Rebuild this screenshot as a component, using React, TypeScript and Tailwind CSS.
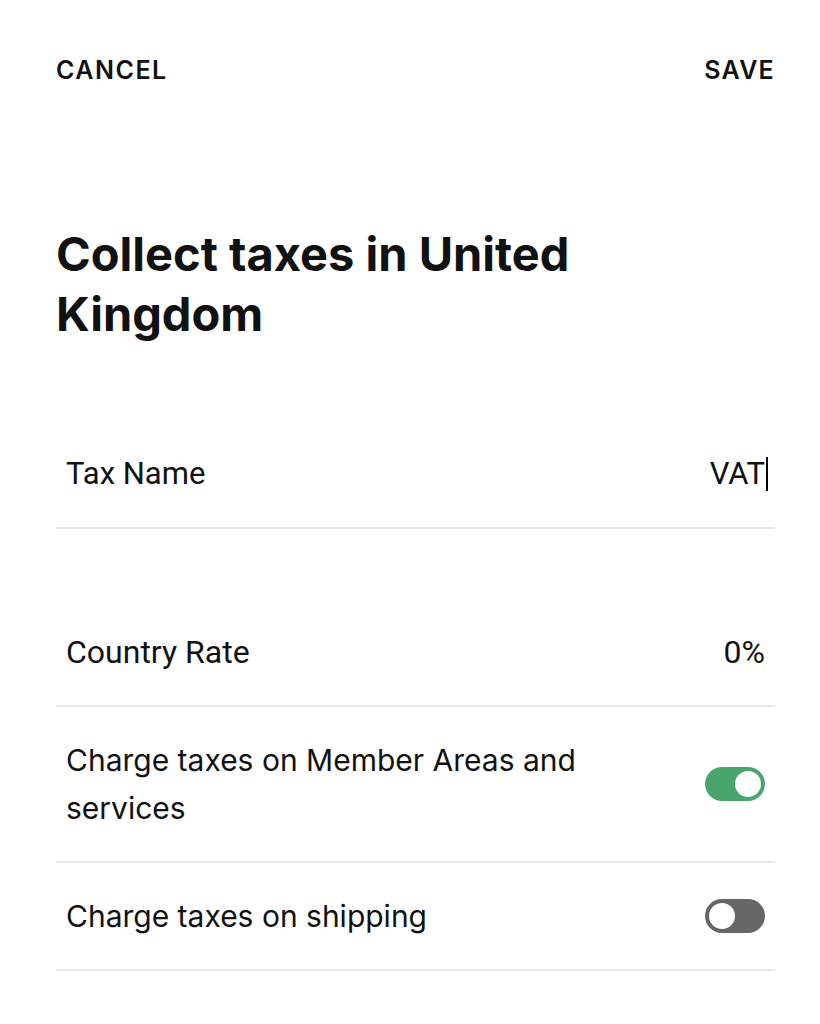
import React from "react"

const sans = { fontFamily: "Inter, 'Noto Sans', sans-serif" }
const narrow = { fontFamily: "Roboto, 'Liberation Sans', sans-serif" }

function Toggle({ on }: { on: boolean }) {
  return (
    <div
      className={`w-[60px] h-[34px] rounded-full flex items-center px-[4px] shrink-0 ${
        on ? "bg-[#48a56d] justify-end" : "bg-[#666666] justify-start"
      }`}
    >
      <div className="w-[26px] h-[26px] rounded-full bg-white"></div>
    </div>
  )
}

export default function App() {
  return (
    <div className="w-[820px] h-[1024px] bg-white text-[#111111] pl-[56px] pr-[45px]" style={sans}>
      {/* Header */}
      <div className="h-[142px] flex items-center justify-between">
        <button className="text-[25px] font-semibold tracking-[0.06em]">CANCEL</button>
        <button className="text-[25px] font-semibold tracking-[0.05em]">SAVE</button>
      </div>

      <h1 className="mt-[82px] text-[47px] leading-[60px] font-bold w-[600px]">
        Collect taxes in United Kingdom
      </h1>

      {/* Tax name */}
      <div className="mt-[77px] flex items-center justify-between px-[10px] py-[29px] border-b-2 border-[#e8e8e8]">
        <span className="text-[31px] leading-[48px]" style={narrow}>Tax Name</span>
        <span className="text-[31px] leading-[48px] flex items-center" style={narrow}>
          VAT
          <span className="w-[2px] h-[34px] bg-black ml-[1px] -mr-[3px]"></span>
        </span>
      </div>

      <div className="mt-[70px]">
        <div className="flex items-center justify-between px-[10px] py-[29px] border-b-2 border-[#e8e8e8]">
          <span className="text-[32px] leading-[48px]" style={narrow}>Country Rate</span>
          <span className="text-[32px] leading-[48px]" style={narrow}>0%</span>
        </div>

        <div className="flex items-center justify-between px-[10px] py-[29px] border-b-2 border-[#e8e8e8]">
          <span className="text-[30px] leading-[48px] w-[560px]">
            Charge taxes on Member Areas and services
          </span>
          <Toggle on={true} />
        </div>

        <div className="flex items-center justify-between px-[10px] py-[29px] border-b-2 border-[#e8e8e8]">
          <span className="text-[30px] leading-[48px]">Charge taxes on shipping</span>
          <Toggle on={false} />
        </div>
      </div>
    </div>
  )
}
